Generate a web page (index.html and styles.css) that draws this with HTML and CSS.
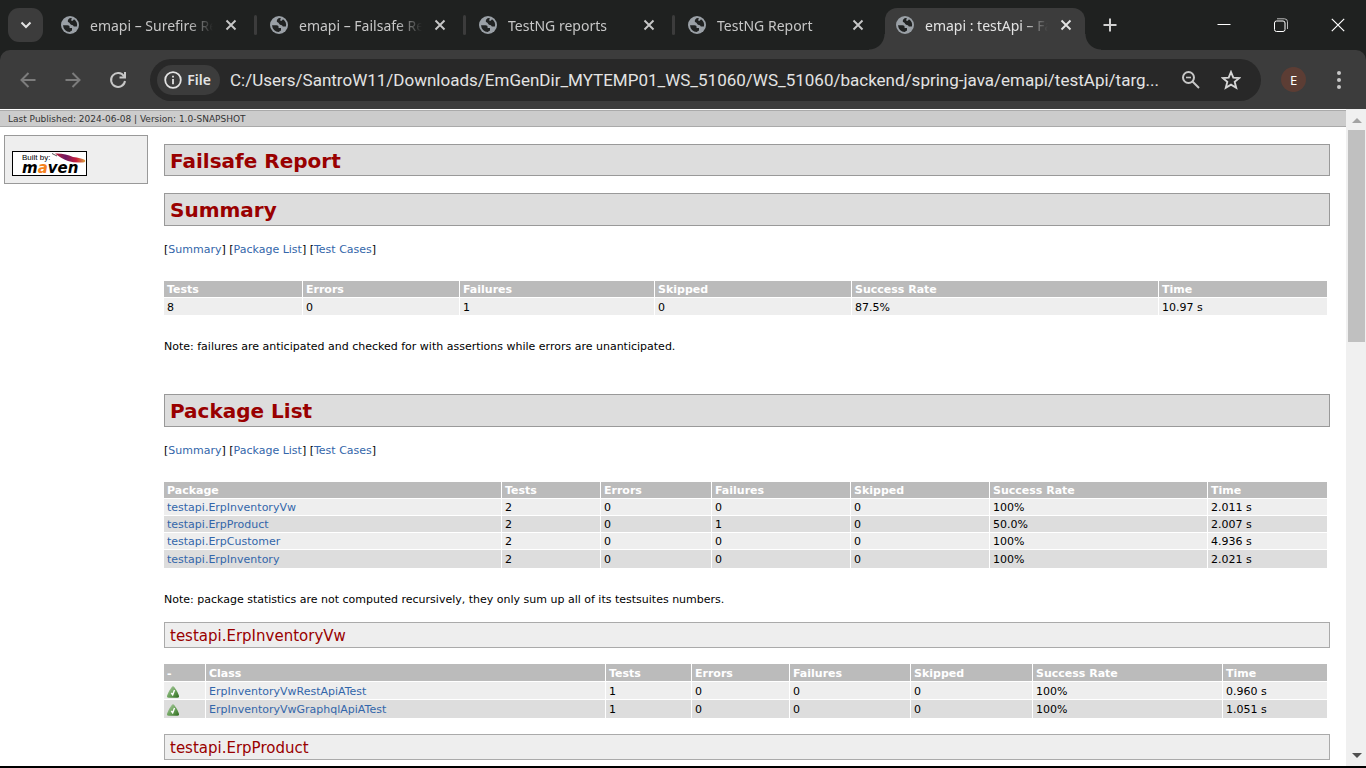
FILE: index.html
```html
<!DOCTYPE html>
<html lang="en">
<head>
<meta charset="utf-8">
<title>emapi : testApi – Failsafe Report</title>
<link rel="stylesheet" href="styles.css">
</head>
<body>
<svg class="defs" aria-hidden="true">
  <defs>
    <linearGradient id="green" x1="0" y1="0" x2="1" y2="1"><stop offset="0" stop-color="#b5cfae"/><stop offset=".5" stop-color="#6fa55f"/><stop offset="1" stop-color="#2c6a1c"/></linearGradient>
  </defs>
  <symbol id="globe" viewBox="0 0 18 18">
    <circle cx="9" cy="9" r="9" fill="#9aa0a6"/>
    <path d="M2 9.300H6.500C8 9.300 8.600 10 8.600 11.200V12H11V14.500L8.600 16A7.100 7.100 0 0 1 2 9.300ZM9 2C7.500 3 6.600 4 6.800 5.600C7 6.600 8 6.400 8.600 7C9.300 8 9.600 8.800 11 9C12.400 9.200 12.300 10.600 13.600 10.600H15.900A7 7 0 0 0 13 3.200L11.800 4.800H10.300V3.400L11 2.300Z" fill="#202222"/>
  </symbol>
  <symbol id="cross" viewBox="0 0 12 12"><path d="M1.500 1.500L10.500 10.500M10.500 1.500L1.500 10.500" fill="none" stroke="currentColor" stroke-width="1.900"/></symbol>
  <symbol id="pass" viewBox="0 0 12 12">
    <path d="M6 .3C7.500.3 12 8.500 12 10.200Q12 11.800 10.200 11.800H1.800Q0 11.800 0 10.200C0 8.500 4.500.3 6 .3Z" fill="url(#green)"/>
    <path d="M4.300 7L5.700 8.800L7.500 4" fill="none" stroke="#fff" stroke-width="1.400"/>
  </symbol>
</svg>

<header class="browser">
  <div class="tabstrip">
    <button class="tab-search" aria-label="Search tabs"><svg width="12" height="8" viewBox="0 0 12 8"><path d="M1.500 1.500L6 6L10.500 1.500" fill="none" stroke="#e3e3e3" stroke-width="2"/></svg></button>
    <div class="tab"><svg class="favicon"><use href="#globe"/></svg><span class="tab-title">emapi – Surefire Report</span><button class="tab-close" aria-label="Close tab"><svg><use href="#cross"/></svg></button></div>
    <div class="tab divided"><svg class="favicon"><use href="#globe"/></svg><span class="tab-title">emapi – Failsafe Report</span><button class="tab-close" aria-label="Close tab"><svg><use href="#cross"/></svg></button></div>
    <div class="tab divided"><svg class="favicon"><use href="#globe"/></svg><span class="tab-title">TestNG reports</span><button class="tab-close" aria-label="Close tab"><svg><use href="#cross"/></svg></button></div>
    <div class="tab divided"><svg class="favicon"><use href="#globe"/></svg><span class="tab-title">TestNG Report</span><button class="tab-close" aria-label="Close tab"><svg><use href="#cross"/></svg></button></div>
    <div class="tab active"><svg class="favicon"><use href="#globe"/></svg><span class="tab-title">emapi : testApi – Failsafe Report</span><button class="tab-close" aria-label="Close tab"><svg><use href="#cross"/></svg></button></div>
    <button class="new-tab" aria-label="New tab"><svg width="14" height="14" viewBox="0 0 14 14"><path d="M7 .5V13.500M.5 7H13.500" stroke="#d0d0d0" stroke-width="2"/></svg></button>
    <div class="window-controls">
      <button aria-label="Minimize"><svg width="14" height="14" viewBox="0 0 14 14"><path d="M.5 6.500H13.500" stroke="#fff"/></svg></button>
      <button aria-label="Restore"><svg width="14" height="14" viewBox="0 0 14 14" fill="none" stroke="#fff"><rect x=".5" y="3" width="10.500" height="10.500" rx="2"/><path d="M3 .8H10.500Q13.500 .8 13.500 3.800V11" stroke="#bbb"/></svg></button>
      <button aria-label="Close"><svg width="14" height="14" viewBox="0 0 14 14"><path d="M.8 .8L13.200 13.200M13.200 .8L.8 13.200" stroke="#fff" stroke-width="1.200"/></svg></button>
    </div>
  </div>
  <div class="toolbar">
    <button class="nav dim" aria-label="Back"><svg width="16" height="16" viewBox="0 0 16 16"><path d="M15.500 8H1.500M8.500 1L1.500 8L8.500 15"/></svg></button>
    <button class="nav dim" aria-label="Forward"><svg width="16" height="16" viewBox="0 0 16 16"><path d="M.5 8H14.500M7.500 1L14.500 8L7.500 15"/></svg></button>
    <button class="nav" aria-label="Reload"><svg width="18" height="18" viewBox="0 0 18 18"><path d="M15 5.200A7 7 0 1 0 16 10M16 1V6.500H10.500"/></svg></button>
    <div class="omnibox">
      <button class="chip"><svg width="18" height="18" viewBox="0 0 18 18"><circle cx="9" cy="9" r="7.800" fill="none" stroke="#e3e3e3" stroke-width="1.800"/><path d="M9 8V13.200M9 4.800V6.500" stroke="#e3e3e3" stroke-width="1.800"/></svg>File</button>
      <input class="url" type="text" aria-label="Address" value="C:/Users/SantroW11/Downloads/EmGenDir_MYTEMP01_WS_51060/WS_51060/backend/spring-java/emapi/testApi/targ...">
      <button class="box-icon" aria-label="Zoom"><svg width="20" height="20" viewBox="0 0 20 20" fill="none" stroke="#c7c7c7" stroke-width="2"><circle cx="7.500" cy="7.500" r="5.500"/><path d="M11.500 11.500L18 18"/><path d="M5 7.500H10" stroke-width="1.600"/></svg></button>
      <button class="box-icon" aria-label="Bookmark"><svg width="20" height="20" viewBox="0 0 20 20"><path d="M10 2L12.300 7.600L18.300 8L13.700 11.900L15.200 17.800L10 14.600L4.800 17.800L6.300 11.900L1.700 8L7.700 7.600Z" fill="none" stroke="#d5d5d5" stroke-width="1.900"/></svg></button>
    </div>
    <button class="avatar" aria-label="Profile">E</button>
    <button class="menu" aria-label="Menu"><svg width="6" height="20" viewBox="0 0 6 20" fill="#c7c7c7"><circle cx="3" cy="3" r="2"/><circle cx="3" cy="10" r="2"/><circle cx="3" cy="17" r="2"/></svg></button>
  </div>
</header>

<div class="viewport">
  <div class="page">
    <div class="breadcrumbs">Last Published: 2024-06-08 | Version: 1.0-SNAPSHOT</div>
    <div class="columns">
      <aside class="sidebar">
        <a href="#maven" aria-label="Built by Maven"><svg class="maven" width="75" height="25" viewBox="0 0 75 25">
          <rect x=".5" y=".5" width="74" height="24" fill="#fff" stroke="#000"/>
          <defs><linearGradient id="feather"><stop offset="0" stop-color="#c22035"/><stop offset=".35" stop-color="#6d1862"/><stop offset=".7" stop-color="#c51d3c"/><stop offset="1" stop-color="#d9a441"/></linearGradient></defs>
          <path d="M43 2.500Q53 2 61 6Q69 7 73 9Q74 11 71 11.500Q62 12 56 10Q50 8 43 2.500Z" fill="url(#feather)"/>
          <path d="M40 2.500L45 5" stroke="#555"/>
          <text class="maven-by" x="10" y="9">Built by:</text>
          <text class="maven-name" x="10" y="22">m<tspan fill="#f58220">a</tspan>ven</text>
        </svg></a>
      </aside>
      <main class="report">
        <h2 class="title">Failsafe Report</h2>

        <section class="section">
          <h2 id="summary">Summary</h2>
          <p class="jump">[<a href="#summary">Summary</a>] [<a href="#packages">Package List</a>] [<a href="#cases">Test Cases</a>]</p>
          <table>
            <colgroup><col width="139"><col width="157"><col width="195"><col width="197"><col width="307"><col width="168"></colgroup>
            <tr><th>Tests</th><th>Errors</th><th>Failures</th><th>Skipped</th><th>Success Rate</th><th>Time</th></tr>
            <tr><td>8</td><td>0</td><td>1</td><td>0</td><td>87.5%</td><td>10.97 s</td></tr>
          </table>
          <p class="note">Note: failures are anticipated and checked for with assertions while errors are unanticipated.</p>
        </section>

        <section class="section packages">
          <h2 id="packages">Package List</h2>
          <p class="jump">[<a href="#summary">Summary</a>] [<a href="#packages">Package List</a>] [<a href="#cases">Test Cases</a>]</p>
          <table>
            <colgroup><col width="338"><col width="99"><col width="111"><col width="139"><col width="139"><col width="218"><col width="119"></colgroup>
            <tr><th>Package</th><th>Tests</th><th>Errors</th><th>Failures</th><th>Skipped</th><th>Success Rate</th><th>Time</th></tr>
            <tr><td><a href="#vw">testapi.ErpInventoryVw</a></td><td>2</td><td>0</td><td>0</td><td>0</td><td>100%</td><td>2.011 s</td></tr>
            <tr><td><a href="#product">testapi.ErpProduct</a></td><td>2</td><td>0</td><td>1</td><td>0</td><td>50.0%</td><td>2.007 s</td></tr>
            <tr><td><a href="#customer">testapi.ErpCustomer</a></td><td>2</td><td>0</td><td>0</td><td>0</td><td>100%</td><td>4.936 s</td></tr>
            <tr><td><a href="#inventory">testapi.ErpInventory</a></td><td>2</td><td>0</td><td>0</td><td>0</td><td>100%</td><td>2.021 s</td></tr>
          </table>
          <p class="note">Note: package statistics are not computed recursively, they only sum up all of its testsuites numbers.</p>

          <h3 id="vw">testapi.ErpInventoryVw</h3>
          <table class="classes">
            <colgroup><col width="42"><col width="400"><col width="86"><col width="98"><col width="121"><col width="122"><col width="190"><col width="104"></colgroup>
            <tr><th>-</th><th>Class</th><th>Tests</th><th>Errors</th><th>Failures</th><th>Skipped</th><th>Success Rate</th><th>Time</th></tr>
            <tr><td><svg class="pass"><use href="#pass"/></svg></td><td><a href="#rest">ErpInventoryVwRestApiATest</a></td><td>1</td><td>0</td><td>0</td><td>0</td><td>100%</td><td>0.960 s</td></tr>
            <tr><td><svg class="pass"><use href="#pass"/></svg></td><td><a href="#graphql">ErpInventoryVwGraphqlApiATest</a></td><td>1</td><td>0</td><td>0</td><td>0</td><td>100%</td><td>1.051 s</td></tr>
          </table>
          <h3 id="product">testapi.ErpProduct</h3>
        </section>
      </main>
    </div>
  </div>
  <div class="scrollbar" aria-hidden="true">
    <svg width="10" height="5" viewBox="0 0 10 5"><path d="M0 5L5 0L10 5Z" fill="#a3a3a3"/></svg>
    <div class="thumb"></div>
    <svg class="down" width="10" height="5" viewBox="0 0 10 5"><path d="M0 0L5 5L10 0Z" fill="#505050"/></svg>
  </div>
</div>
</body>
</html>
```
FILE: styles.css
```css
* { box-sizing: border-box; }

body {
  margin: 0;
  height: 100vh;
  display: flex;
  flex-direction: column;
  overflow: hidden;
  background: #fff;
  border-bottom: 2px solid #000;
  font: 11px/16px "DejaVu Sans", Verdana, sans-serif;
  color: #000;
}

.defs { position: absolute; width: 0; height: 0; }
a { color: #36a; text-decoration: none; }
button { border: 0; padding: 0; background: none; font: inherit; color: inherit; display: flex; align-items: center; justify-content: center; }

/* Browser frame */
.browser { flex: none; background: #1f2120; font-family: "Noto Sans", "Segoe UI", sans-serif; color: #c7c7c7; }
.tabstrip { display: flex; height: 50px; padding-left: 8px; }
.tab-search { width: 35px; height: 34px; margin: 8px 3px 0 0; border-radius: 11px; background: #3c3c3c; }
.tab { flex: 0 1 209px; position: relative; display: flex; align-items: center; padding: 0 18px 0 15px; min-width: 0; }
.divided::before { content: ""; position: absolute; left: -1px; top: 15px; width: 3px; height: 20px; border-radius: 2px; background: #3c3c3c; }
.favicon { flex: none; width: 18px; height: 18px; }
.tab-title {
  flex: 1;
  margin: 0 12px 0 11px;
  padding-top: 2px;
  overflow: hidden;
  white-space: nowrap;
  font-size: 14px;
  line-height: 24px;
  -webkit-mask-image: linear-gradient(90deg, #000 80%, transparent);
  mask-image: linear-gradient(90deg, #000 80%, transparent);
}
.tab-close { flex: none; width: 12px; height: 12px; }
.tab-close svg { width: 12px; height: 12px; }
.active { color: #e3e3e3; z-index: 0; margin-left: -1px; }
.active::before { content: ""; position: absolute; z-index: -1; inset: 8px 5px 0 4px; border-radius: 12px 12px 0 0; background: #3c3c3c; }
.active::after {
  content: "";
  position: absolute;
  z-index: -1;
  inset: auto -11px 0 -12px;
  height: 16px;
  background:
    radial-gradient(circle at 0 0, transparent 15px, #3c3c3c 16px) left / 16px 16px no-repeat,
    radial-gradient(circle at 100% 0, transparent 15px, #3c3c3c 16px) right / 16px 16px no-repeat;
}
.new-tab { width: 28px; margin-left: 6px; }
.window-controls { display: flex; margin-left: auto; }
.window-controls button { width: 57px; }

.toolbar { display: flex; align-items: center; height: 59px; padding: 0 15px 0 5px; background: #3c3c3c; border-radius: 10px 10px 0 0; }
.nav { width: 45px; height: 40px; }
.nav svg { fill: none; stroke: #c7c7c7; stroke-width: 2; }
.dim svg { stroke: #7c7c7c; }
.omnibox { flex: 1; display: flex; align-items: center; min-width: 0; height: 42px; margin-left: 10px; padding: 0 20px 0 7px; border-radius: 21px; background: #282828; }
.chip { gap: 5px; width: 63px; height: 30px; padding-right: 2px; border-radius: 15px; background: #3c3c3c; color: #e3e3e3; font-size: 14px; font-weight: 600; }
.url { flex: 1; min-width: 0; height: 30px; margin-left: 10px; padding: 0; border: 0; background: none; color: #e3e3e3; font: 17px/30px Roboto, "Segoe UI", sans-serif; }
.box-icon { width: 20px; height: 20px; margin-left: 20px; }
.url + .box-icon { margin-left: 10px; }
.avatar { width: 25px; height: 25px; margin-left: 20px; border-radius: 50%; background: #5c3d34; color: #fff; font-size: 13px; }
.menu { width: 25px; height: 30px; margin-left: 20px; }

/* Site */
.viewport { flex: 1; display: flex; min-height: 0; }
.page { flex: 1; min-width: 0; overflow: hidden; padding-top: 1px; }
.breadcrumbs { height: 17px; padding-left: 8px; border: solid #aaa; border-width: 1px 0; background: #ccc; color: #333; font-size: 9px; line-height: 16px; }
.columns { display: flex; align-items: flex-start; gap: 16px; padding: 8px 16px 0 4px; }
.sidebar { flex: none; width: 144px; padding: 15px 7px 7px; border: 1px solid #999; background: #eee; }
.maven { display: block; }
.maven-by { font: 8px "Liberation Sans", Arial, sans-serif; }
.maven-name { font: italic bold 15px "DejaVu Sans", sans-serif; }

.report { flex: 1; min-width: 0; padding-top: 9px; }
h2, h3 { margin: 0; padding: 0 5px; color: #900; }
h2 { height: 33px; border: 1px solid #999; background: #ddd; font-size: 20px; line-height: 32px; }
h3 { height: 26px; border: 1px solid #aaa; background: #eee; font-size: 15px; font-weight: 400; line-height: 26px; }
.title { height: 32px; }
.section { margin-top: 17px; }
.packages { margin-top: 39px; }
.jump { margin: 16px 0 23px; }
.note { margin: 24px 0 14px; }

table { width: calc(100% - 3px); table-layout: fixed; border-collapse: separate; border-spacing: 0; }
th, td { height: 17px; padding: 2px 3px 0; border: solid #fff; border-width: 0 1px 1px 0; line-height: 14px; text-align: left; white-space: nowrap; }
th { background: #bbb; color: #fff; }
td { background: #eee; }
tr:nth-child(odd) td { background: #ddd; }
tr:last-child td { border-bottom: 0; }
.packages tr:last-child td { height: 18px; }
th:last-child, td:last-child { border-right: 0; }
.classes { margin: 16px 0; }
.classes th, .classes td { height: 18px; }
.pass { display: block; width: 12px; height: 12px; }

.scrollbar { flex: none; display: flex; flex-direction: column; align-items: center; width: 20px; padding: 9px 1px 8px 2px; background: #f0f0f0; }
.thumb { width: 100%; height: 212px; margin-top: 7px; background: #c0c0c0; }
.down { margin-top: auto; }
```
